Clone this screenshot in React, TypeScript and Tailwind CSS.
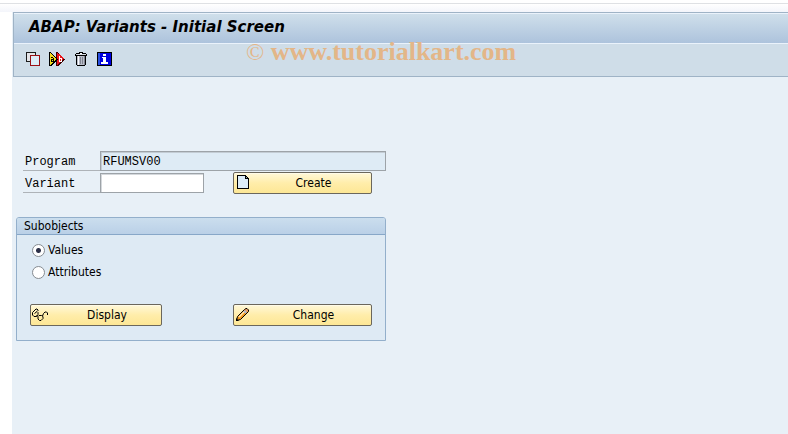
import React, { useState } from 'react'

function CopyIcon() {
  return (
    <svg width="16" height="16" viewBox="0 0 16 16" shapeRendering="crispEdges">
      <path d="M1 1h10v10H1z" fill="#1c1c1c" />
      <path d="M2 2h8v8H2z" fill="#e4e4e8" />
      <path d="M5 4h10v11H5z" fill="#9a1016" />
      <path d="M6 5h8v9H6z" fill="#dcecf8" />
    </svg>
  )
}

function RenameIcon() {
  return (
    <svg width="16" height="16" viewBox="0 0 16 16" shapeRendering="crispEdges">
      <path d="M7 1h2v1h1v1h1v1h1v1h1v1h1v1h1v1h1v1h-1v1h-1v1h-1v1h-1v1h-1v1h-1v1H7z" fill="#400000" />
      <path d="M8 2v12h1v-1h1v-1h1v-1h1v-1h1v-1h1V8h1V7h-1V6h-1V5h-1V4h-1V3H9V2z" fill="#e8141c" />
      <path d="M0 1h2v1h1v1h1v1h1v1h1v1h1v1h1v1h1v1H8v1H7v1H6v1H5v1H4v1H3v1H0z" fill="#000" />
      <path d="M1 2v12h1v-1h1v-1h1v-1h1v-1h1V9h1V7H6V6H5V5H4V4H3V3H2V2z" fill="#f5dc1e" />
      <path d="M2 6h2v1H2zM4 7h1v4H2V8h2zM3 9v1h1V9z" fill="#000" />
      <path d="M10 5h1v2h2v4h-3zM11 8v2h1V8z" fill="#fff" fillRule="evenodd" />
    </svg>
  )
}

function TrashIcon() {
  return (
    <svg width="16" height="16" viewBox="0 0 16 16" shapeRendering="crispEdges">
      <path d="M6 1h4v1h3v1h1v2h-1v9h-1v1H4v-1H3V5H2V3h1V2h3z" fill="#000" />
      <path d="M3 3h10v1H3z" fill="#d8dce4" />
      <path d="M7 2h2v1H7z" fill="#fff" />
      <path d="M4 5h8v9H4z" fill="#b8bcc8" />
      <path d="M5 5h1v9H5z" fill="#fff" />
      <path d="M7 6h1v7H7zM9 6h1v7H9zM11 5h1v9h-1z" fill="#80848f" />
    </svg>
  )
}

function InfoIcon() {
  return (
    <svg width="16" height="16" viewBox="0 0 16 16" shapeRendering="crispEdges">
      <path d="M0 1h15v14H0z" fill="#000" />
      <path d="M1 2h13v12H1z" fill="#2a50e0" />
      <path d="M3 2h11v12H3z" fill="#0000e0" />
      <path d="M6 3h3v2H6zM5 6h4v5h2v2H4v-2h2V7H5z" fill="#fff" />
    </svg>
  )
}

function PageIcon() {
  return (
    <svg width="16" height="16" viewBox="0 0 16 16" shapeRendering="crispEdges">
      <path d="M3 0h9v1h1v1h1v1h1v11H3z" fill="#000" />
      <path d="M4 1h7v3h3v9H4z" fill="#dcecf8" />
      <path d="M12 2h1v1h-1z" fill="#8ca4b8" />
    </svg>
  )
}

function GlassesIcon() {
  return (
    <svg width="18" height="16" viewBox="0 0 18 16" fill="none" stroke="#000" strokeWidth="1">
      <path d="M7 4V3L6 2H5L1.500 5.500V8L3 9.500H5L7 7.500V5.500L6 4.500L3.500 6.500" />
      <path d="M5 9.500L7 8.500" />
      <path d="M8 8.500H10.500L12 9.500V11.500L10 13.500H8.500L7 12V9.500z" />
      <path d="M11.500 9L12.500 6.500L14 5H15.500L16.500 6V8" />
    </svg>
  )
}

function PencilIcon() {
  return (
    <svg width="16" height="16" viewBox="0 0 16 16">
      <path d="M2.500 13.500L3.500 9.500L10.500 2.500L12 1.500H13L14.500 3V4.500L6.500 12.500z" fill="#f39a1d" stroke="#000" />
      <path d="M4.500 9.500L10 4l1 1L5.500 10.500z" fill="#ffe8b8" />
      <path d="M9.500 4.500L11 3l2 2-1.500 1.500z" fill="#a8b8dc" />
      <path d="M11.500 2.500L12.500 2L14 3.500L13 4.500z" fill="#e89a90" />
      <path d="M2 14v-3l3 3z" fill="#000" />
    </svg>
  )
}

interface SapButtonProps {
  label: string
  icon: React.ReactNode
  className: string
}

function SapButton({ label, icon, className }: SapButtonProps) {
  return (
    <button
      type="button"
      className={`flex h-[22px] items-center rounded-[2px] border border-[#6b675c] bg-gradient-to-b from-[#fff8d8] via-[#ffedaa] to-[#fde795] shadow-[inset_0_1px_0_#fffbe8] ${className}`}
    >
      <span className="flex w-[22px] shrink-0">{icon}</span>
      <span className="flex-1 text-center">{label}</span>
    </button>
  )
}

const toolbar = [
  { name: 'Copy', icon: <CopyIcon /> },
  { name: 'Rename', icon: <RenameIcon /> },
  { name: 'Delete', icon: <TrashIcon /> },
  { name: 'Information', icon: <InfoIcon /> }
]

const subobjects = ['Values', 'Attributes']

export default function App() {
  const [variant, setVariant] = useState('')
  const [selected, setSelected] = useState('Values')

  return (
    <div className="flex h-screen flex-col overflow-hidden bg-white font-['DejaVu_Sans_Condensed','DejaVu_Sans',sans-serif] text-[12px] leading-4 text-black">
      <div className="mt-[3px] h-[9px] shrink-0 border-t border-[#dfe1e4] bg-gradient-to-b from-white to-[#f3f5fb]" />

      <main className="ml-3 flex-1 bg-[#e8f0f7]">
        <header className="relative ml-px border-y border-l border-[#9fb3c6]">
          <h1 className="h-[31px] border-y border-[#eaf2fb] bg-gradient-to-b from-[#cfdfeb] to-[#adc3dc] pl-[15px] font-['DejaVu_Sans',sans-serif] text-[15px] leading-[26px] font-bold italic">
            ABAP: Variants - Initial Screen
          </h1>
          <div className="flex h-8 items-center gap-2 bg-[#cfdde8] pb-0.5 pl-[11px]">
            {toolbar.map((item) => (
              <button key={item.name} type="button" aria-label={item.name}>
                {item.icon}
              </button>
            ))}
          </div>
          {/* Watermark */}
          <div className="pointer-events-none absolute top-[23px] left-[232px] font-['Liberation_Serif',serif] text-[26px] leading-8 whitespace-nowrap text-[#e3b688]">
            <span className="text-[24px]">©</span> <b>www.tutorialkart.com</b>
          </div>
        </header>

        <div className="w-[374px] pt-[73px] pl-1">
          <div className="pl-[7px] font-['Liberation_Mono',monospace]">
            <div className="flex h-[22px] items-center">
              <label htmlFor="program" className="h-5 w-[77px] border-b border-[#aeb3b8] pt-[3px] pl-0.5">
                Program
              </label>
              <input
                id="program"
                readOnly
                value="RFUMSV00"
                className="h-5 min-w-0 flex-1 border border-[#9da3a8] bg-[#deebf5] px-0.5 pt-0.5 shadow-[inset_1px_1px_0_#c3ccd4] outline-none"
              />
            </div>
            <div className="flex h-[22px] items-center">
              <label htmlFor="variant" className="h-5 w-[77px] border-b border-[#aeb3b8] pt-[3px] pl-0.5">
                Variant
              </label>
              <input
                id="variant"
                value={variant}
                onChange={(e) => setVariant(e.target.value)}
                className="h-5 w-[104px] border border-[#9da3a8] bg-white px-0.5 pt-0.5 shadow-[inset_1px_1px_0_#d4d8dc] outline-none"
              />
              <SapButton
                label="Create"
                icon={<PageIcon />}
                className="mr-[14px] ml-auto w-[139px] font-['DejaVu_Sans_Condensed','DejaVu_Sans',sans-serif]"
              />
            </div>
          </div>

          <section className="mt-[23px] rounded-t-[3px] border border-[#93afcb] bg-[#deeaf4]">
            <h2 className="h-[17px] rounded-t-[2px] border-b border-[#87a7c8] bg-gradient-to-b from-[#cbdeee] to-[#bad0e7] pl-[7px]">
              Subobjects
            </h2>
            <div className="pt-1 pl-[15px]">
              {subobjects.map((name) => (
                <label key={name} className="flex h-[22px] items-center gap-[3px]">
                  <input
                    type="radio"
                    name="subobject"
                    checked={selected === name}
                    onChange={() => setSelected(name)}
                    className="size-[13px] appearance-none rounded-full border border-[#858b91] bg-white checked:bg-[radial-gradient(circle,#2c3048_2px,#fff_3px)]"
                  />
                  {name}
                </label>
              ))}
            </div>
            <div className="mt-[21px] mb-[14px] flex justify-between pr-[13px] pl-[13px]">
              <SapButton label="Display" icon={<GlassesIcon />} className="w-[132px]" />
              <SapButton label="Change" icon={<PencilIcon />} className="w-[139px]" />
            </div>
          </section>
        </div>
      </main>
    </div>
  )
}
